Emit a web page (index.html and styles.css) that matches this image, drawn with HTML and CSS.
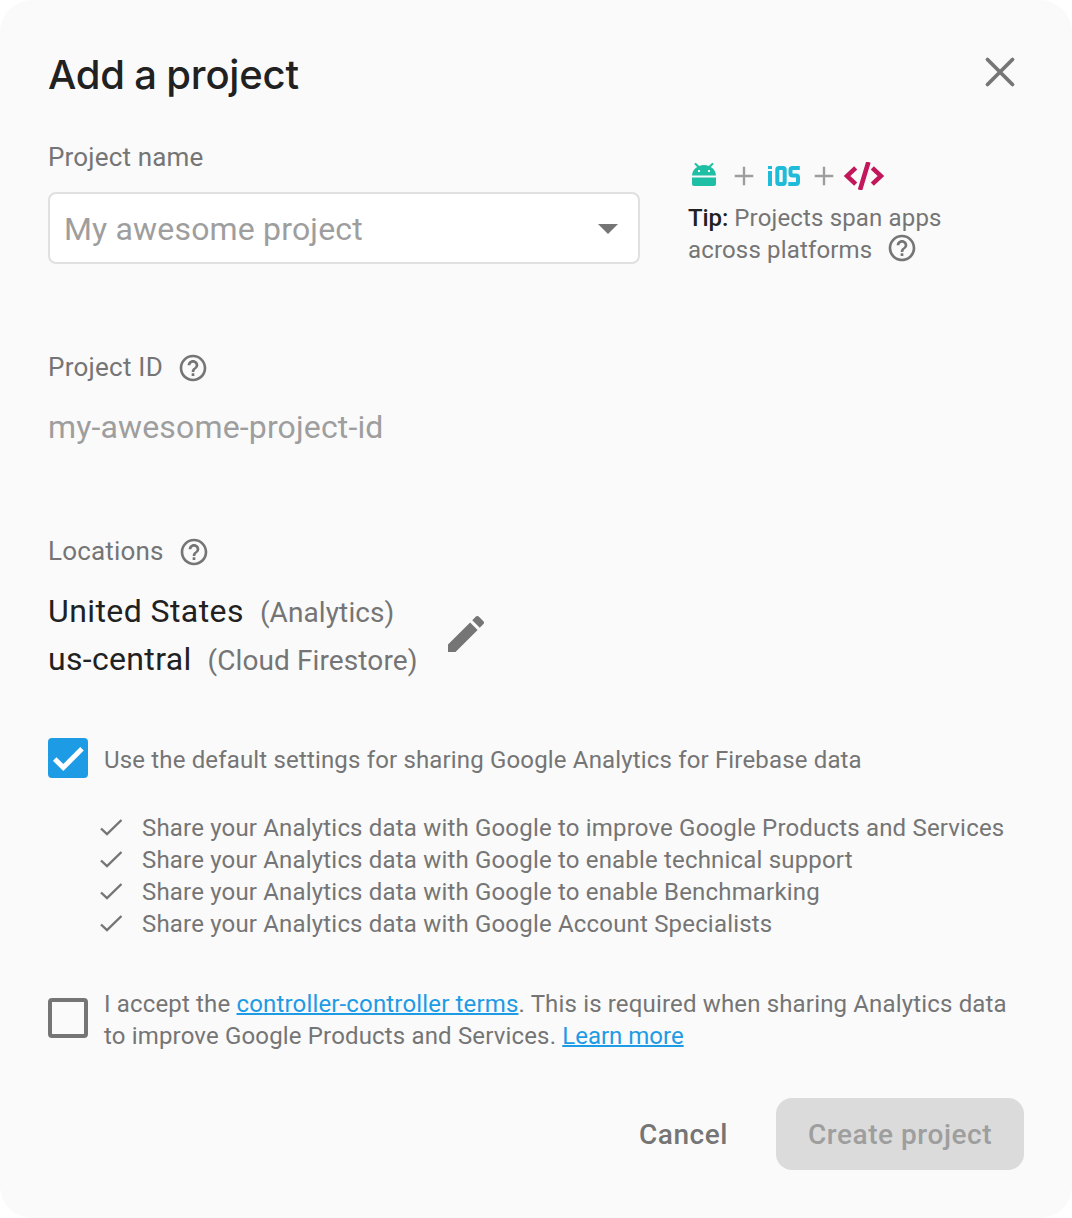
FILE: index.html
```html
<!DOCTYPE html>
<html lang="en">
<head>
<meta charset="utf-8">
<title>Add a project</title>
<link rel="stylesheet" href="styles.css">
</head>
<body>
<svg class="defs" width="0" height="0" aria-hidden="true">
  <symbol id="help" viewBox="0 0 24 24"><path d="M11 18h2v-2h-2v2zm1-16C6.48 2 2 6.48 2 12s4.480 10 10 10 10-4.480 10-10S17.520 2 12 2zm0 18c-4.410 0-8-3.590-8-8s3.590-8 8-8 8 3.590 8 8-3.590 8-8 8zm0-14c-2.210 0-4 1.790-4 4h2c0-1.100.9-2 2-2s2 .9 2 2c0 2-3 1.750-3 5h2c0-2.250 3-2.500 3-5 0-2.210-1.790-4-4-4z"/></symbol>
  <symbol id="tick" viewBox="0 0 24 18"><path d="M2 9.500 8 15.200 22.500 1"/></symbol>
</svg>
<main class="dialog">
  <header class="head">
    <h1 class="title">Add a project</h1>
    <svg class="close" viewBox="0 0 32 32"><path d="M3.500 3.500 28.500 28.500M28.500 3.500 3.500 28.500"/></svg>
  </header>

  <div class="top">
    <div class="name">
      <div class="label">Project name</div>
      <div class="select"><span>My awesome project</span><svg class="arrow" viewBox="0 0 20 10"><path d="M0 0h20L10 10z"/></svg></div>
    </div>
    <div class="tip">
      <div class="platforms">
        <svg class="android" viewBox="0 0 26 26"><path d="M1 12.600C1 9 3.200 5.800 6.200 4L3.200 1 4.700-.3 8.200 3C11 1.500 15 1.500 17.800 3L21.300-.3 22.800 1 19.800 4C22.800 5.800 25 9 25 12.600zM1 14.600h24v6.400q0 2-2 2H3q-2 0-2-2z"/><path class="eye" d="M7 7h2v2H7zM17 7h2v2h-2z"/></svg>
        <svg class="plus" viewBox="0 0 20 20"><path d="M10 .7v18.600M.7 10h18.600"/></svg>
        <svg class="ios" viewBox="0 0 34 20"><path d="M3 5v15M3 0v3M12 2h4q1.700 0 1.700 1.700v12.600q0 1.700-1.700 1.700h-4q-1.700 0-1.700-1.700V3.700Q10.300 2 12 2M32.800 2H25.500q-2 0-2 2v3.500q0 2 2 2h3.500q2 0 2 2V16q0 2-2 2H21.300"/></svg>
        <svg class="plus second" viewBox="0 0 20 20"><path d="M10 .7v18.600M.7 10h18.600"/></svg>
        <svg class="code" viewBox="0 0 40 28"><path d="M11.700 5.900 3 14l8.700 8.100M28.300 5.900 37 14l-8.700 8.100M24.400 0 16 28"/></svg>
      </div>
      <div class="text"><b>Tip:</b> Projects span apps<br>across platforms<svg class="help tip-help"><use href="#help"/></svg></div>
    </div>
  </div>

  <div class="label row id-label"><span>Project ID</span><svg class="help"><use href="#help"/></svg></div>
  <div class="project-id">my-awesome-project-id</div>

  <div class="label row loc-label"><span>Locations</span><svg class="help"><use href="#help"/></svg></div>
  <div class="locations">
    <div class="places">
      <div class="place country">United States<small>(Analytics)</small></div>
      <div class="place">us-central<small>(Cloud Firestore)</small></div>
    </div>
    <svg class="pencil" viewBox="3 3 18 18"><path d="M3 17.250V21h3.750L17.810 9.940l-3.750-3.750L3 17.250zM20.710 7.040c.39-.39.39-1.020 0-1.410l-2.340-2.340c-.39-.39-1.020-.39-1.410 0l-1.830 1.830 3.750 3.750 1.830-1.830z"/></svg>
  </div>

  <div class="option sharing">
    <div class="box checked"><svg viewBox="0 0 40 40"><path d="M6.700 21 15.300 29.500 34 10.700"/></svg></div>
    <div class="text">Use the default settings for sharing Google Analytics for Firebase data</div>
  </div>
  <ul class="list text">
    <li><svg class="tick"><use href="#tick"/></svg>Share your Analytics data with Google to improve Google Products and Services</li>
    <li><svg class="tick"><use href="#tick"/></svg>Share your Analytics data with Google to enable technical support</li>
    <li><svg class="tick"><use href="#tick"/></svg>Share your Analytics data with Google to enable Benchmarking</li>
    <li><svg class="tick"><use href="#tick"/></svg>Share your Analytics data with Google Account Specialists</li>
  </ul>
  <div class="option terms">
    <div class="box"></div>
    <div class="text">I accept the <a>controller-controller terms</a>. This is required when sharing Analytics data<br>to improve Google Products and Services. <a class="more">Learn more</a></div>
  </div>

  <footer class="actions">
    <div class="cancel">Cancel</div>
    <div class="create">Create project</div>
  </footer>
</main>
</body>
</html>
```
FILE: styles.css
```css
* { box-sizing: border-box; }
body { margin: 0; background: #fff; font-family: Roboto, "Liberation Sans", sans-serif; color: #757575; }
svg { display: block; flex: none; }
.defs { position: absolute; }
.dialog { width: 1072px; height: 1218px; padding: 48px 48px 0; background: #fafafa; border-radius: 32px; display: flex; flex-direction: column; }
.head { height: 48px; display: flex; justify-content: space-between; }
.title { margin: 0; font: 500 40px/53px Inter, sans-serif; letter-spacing: -.2px; word-spacing: -1px; color: #212121; white-space: nowrap; }
.close { width: 32px; height: 32px; margin: 8px 8px 0 0; fill: none; stroke: #757575; stroke-width: 3.8; stroke-linecap: round; }
.top { height: 252px; display: flex; gap: 48px; }
.name { width: 592px; padding-top: 45px; }
.label { font-size: 26px; line-height: 32px; letter-spacing: .17px; }
.select { margin-top: 19px; height: 72px; border: 2px solid #e0e0e0; border-radius: 8px; background: #fff; padding: 2px 20px 0 14px; display: flex; align-items: center; justify-content: space-between; font-size: 32px; letter-spacing: .17px; color: #9e9e9e; }
.arrow { width: 20px; height: 10px; fill: #757575; }
.tip { padding-top: 64px; }
.platforms { height: 32px; margin-bottom: 10px; display: flex; align-items: center; padding-left: 3px; }
.android { width: 26px; height: 26px; fill: #1fbfa5; overflow: visible; }
.eye { fill: #fafafa; }
.plus { width: 20px; height: 20px; margin: 0 13px 0 17px; fill: none; stroke: #9e9e9e; stroke-width: 2.400; }
.plus.second { margin: 0 10px 0 13px; }
.ios { width: 34px; height: 20px; fill: none; stroke: #20bbd8; stroke-width: 4; }
.code { width: 40px; height: 28px; fill: none; stroke: #c2185b; stroke-width: 4.600; }
.text { font-size: 24px; line-height: 32px; letter-spacing: .16px; white-space: nowrap; }
.text b { font-weight: 500; color: #212121; letter-spacing: -.1px; }
.help { width: 32px; height: 32px; fill: #757575; }
.tip-help { display: inline-block; vertical-align: top; margin: -2px 0 0 14px; }
.row { display: flex; align-items: center; gap: 14px; }
.id-label { height: 40px; letter-spacing: .25px; }
.id-label span, .loc-label span { margin-top: -2px; }
.project-id { margin-top: 19px; height: 40px; font-size: 32px; line-height: 40px; letter-spacing: .15px; color: #9e9e9e; }
.loc-label { margin-top: 85px; height: 40px; }
.locations { display: flex; margin-top: 15px; height: 96px; }
.place { height: 48px; line-height: 48px; font-size: 32px; letter-spacing: .33px; color: #212121; white-space: nowrap; }
.place.country { letter-spacing: .42px; }
.place small { font-size: 28px; color: #757575; letter-spacing: .1px; margin-left: 16px; }
.pencil { width: 36px; height: 36px; fill: #757575; margin: 29px 0 0 30px; }
.option { display: flex; gap: 16px; }
.box { width: 40px; height: 40px; border: 4px solid #757575; border-radius: 4px; flex: none; }
.box.checked { border: 0; background: #1e9be5; }
.box path { fill: none; stroke: #fff; stroke-width: 5; }
.sharing { margin-top: 55px; height: 74px; }
.sharing .text { padding-top: 6px; }
.list { list-style: none; margin: 0; padding: 0 0 0 51px; letter-spacing: .18px; }
.list li { height: 32px; display: flex; align-items: center; gap: 16px; }
.tick { width: 24px; height: 18px; margin-right: 3px; fill: none; stroke: #757575; stroke-width: 2.400; }
.terms { margin-top: 48px; height: 110px; }
.terms .box { margin-top: 10px; }
a { color: #1e9be5; text-decoration: underline 2px; }
.more { letter-spacing: 0; }
.actions { display: flex; justify-content: flex-end; gap: 48px; height: 72px; line-height: 74px; font-size: 28px; font-weight: 500; letter-spacing: .55px; }
.create { width: 248px; text-align: center; border-radius: 16px; background: #dbdbdb; color: #9e9e9e; }
```
